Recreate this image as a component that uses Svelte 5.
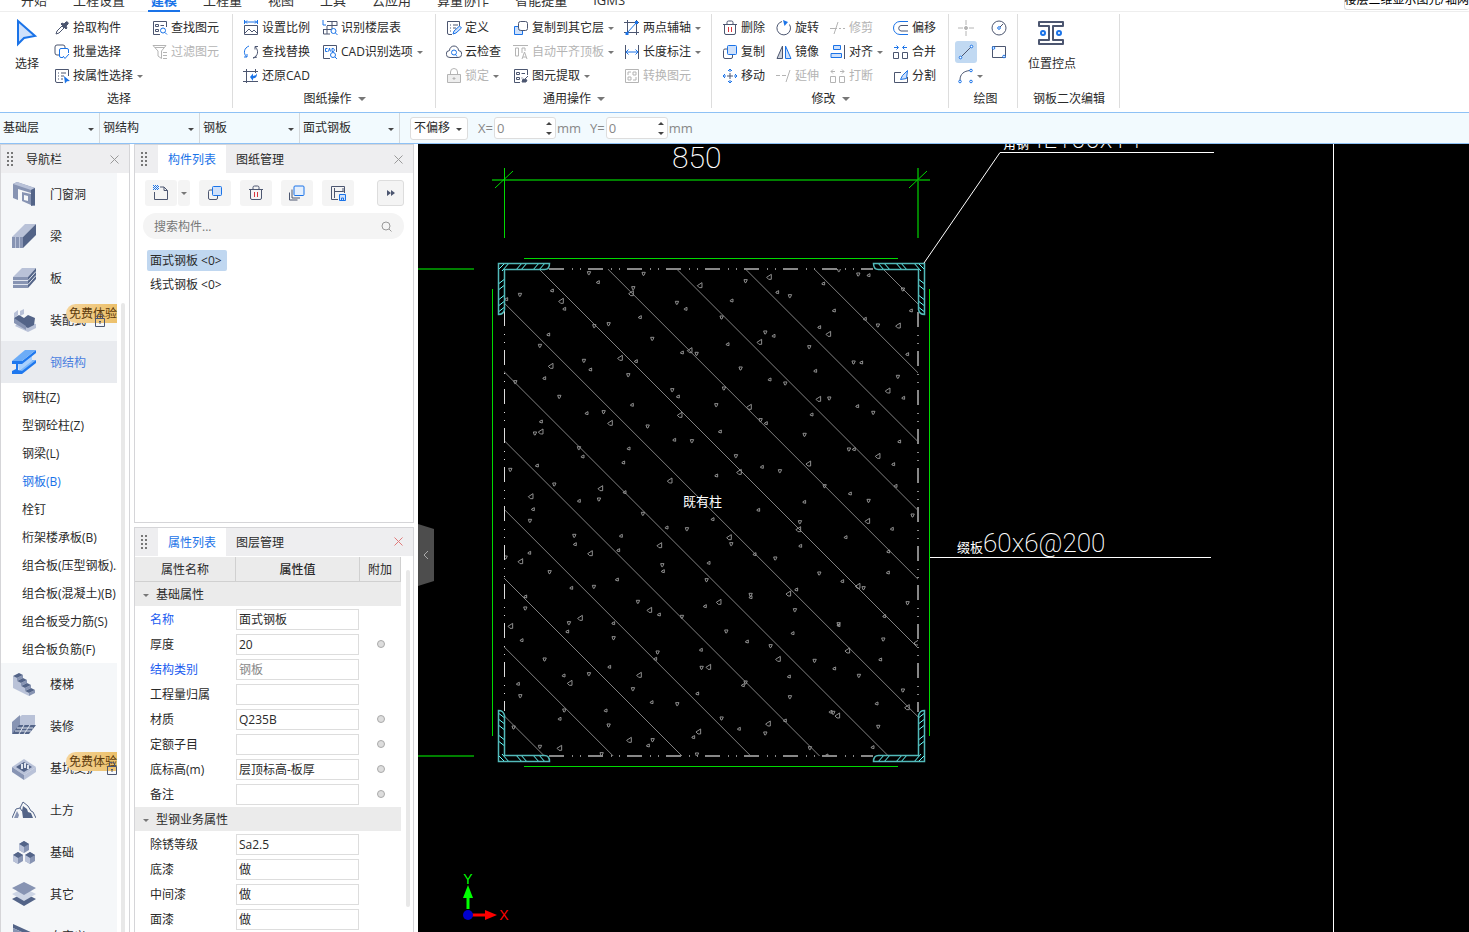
<script>
	const tabs = ['开始', '工程设置', '建模', '工程量', '视图', '工具', '云应用', '算量协作', '智能提量', 'IGMS'];
	let activeTab = $state('建模');

	// Inner markup of the 16x16 tool icons
	const icons = {
		pick: '<path d="M2 14l1-3 5-5 2 2-5 5z"/><path fill="currentColor" d="M7 4l5 5 1-1-1-2 2-2c1-1-1-3-2-2l-2 2-2-1z"/>',
		batch: '<path d="M5 11H3a2 2 0 0 1-2-2V3a2 2 0 0 1 2-2h6a2 2 0 0 1 2 2v1"/><path stroke="#1a73e8" d="M14.500 9V6a1.500 1.500 0 0 0-1.500-1.500H7A1.500 1.500 0 0 0 5.500 6v6A1.500 1.500 0 0 0 7 13.500h2M9 12l2 2.500 4-4.500"/>',
		property: '<path d="M9 14.500H3A1.500 1.500 0 0 1 1.500 13V1.500h13V8M4 5h1m2 0h5M4 8h1m2 0h3M4 11h1m2 0h2"/><path fill="#1a73e8" stroke="none" d="M10 8l6 5-3 .3-2 2.200z"/>',
		find: '<path d="M8 14.500H1.500v-13h13V7M3.500 4.500h3v2h-3zm0 5h3v2h-3zM8.500 5.500H12"/><g stroke="#1a73e8"><circle cx="11" cy="10.500" r="2.500"/><path d="M13 12.500l2 2"/></g>',
		filter: '<path d="M1 1.500h13L9.500 7v7.500L6 12V7zM11 8.500h4m-4 3h4m-4 3h4M3 3.500h9"/>',
		scale: '<path d="M1.500 5.500h13v9h-13zM2 13l4-4 3 3 2-2 3 3"/><path stroke="#1a73e8" d="M1.500 0v4M14.500 0v4M2 2h12M4 .5L2.500 2 4 3.500M12 .5L13.500 2 12 3.500"/>',
		floors: '<path d="M5 1.500h10V6M10 1v8M5 5.500h10M1.500 9v5H8M1.500 9.500H9M5 6v8"/><g stroke="#1a73e8"><path d="M1 0v5h3"/><circle cx="11.500" cy="11" r="2.500"/><path d="M13.500 13l2 2"/></g>',
		replace: '<path stroke="#1a73e8" d="M6 2C1 4 0 9 3.500 13M1 13h3v-3"/><path d="M10 14c5-2 6-7 2.500-11M15 2.500h-3v3M10 14l4-1"/>',
		cad: '<path d="M8 14.500H1.500v-13h13V8"/><g stroke="#1a73e8"><path d="M5.500 4.500h-2v3h2M6.500 7.500L7.500 4l1 3.500M10 4.500v3h1.500l1-1.500-1-1.500z"/><circle cx="11" cy="11" r="2.500"/><path d="M13 13l2 2"/></g>',
		restore: '<path d="M0 3.500h15M3.500 1v14M0 13.500h15M12.500 1v4"/><path fill="#1a73e8" stroke="none" d="M7 9l3-3.500V8c2 0 3.500-1 4-3 0 4-1 5-4 5.500V13z"/>',
		define: '<path d="M6 14.500H3A1.500 1.500 0 0 1 1.500 13V1.500h12V6M4 5h1m2 0h5M4 8h1m2 0h3M4 11h1"/><path stroke="#1a73e8" fill="#cfe1fb" d="M7 14l1-3 5.500-5 2 2-5.500 5z"/>',
		cloud: '<path d="M4 13.500a3.500 3.500 0 0 1-.5-7 4.500 4.500 0 0 1 9 0 3.500 3.500 0 0 1-.5 7z"/><g stroke="#1a73e8"><circle cx="8" cy="8.500" r="2.500"/><path d="M9.500 10.500l1.500 2"/></g>',
		lock: '<path fill="#eee" d="M1.500 6.500h13v8h-13z"/><path d="M4.500 6V4a3.500 3.500 0 0 1 7 0v2M8 9v3M6.500 10.500h3"/>',
		copyTo: '<path fill="#cfe1fb" stroke="#1a73e8" d="M5 6.500H1.500v8h8V11"/><rect x="5.500" y="1.500" width="9" height="9" rx="2"/>',
		alignTop: '<path d="M0 1.500h15M2.500 4v8h3V4zM9 9V4h3v3M9 15l2.500-7 2.500 7M10 13h3"/>',
		extract: '<path d="M7 14.500H1.500v-13h13V7M3.500 4.500h3v2h-3zm0 5h3v2h-3zM8.500 5.500H12M8.500 10h1"/><path fill="currentColor" d="M9 14l1-3 4 1-1 2zM12 11l3-3"/>',
		axis: '<path d="M3.500 0v15M12.500 0v15M0 2.500h15M0 12.500h15"/><path stroke="#1a73e8" d="M3 13L13 2"/><path fill="#1a73e8" stroke="none" d="M1.500 12h3v3h-3zM11 1h3v3h-3z"/>',
		length: '<path d="M1.500 1v14M14.500 1v14"/><path stroke="#1a73e8" d="M2 8h12M4.500 5.500L2 8l2.500 2.500M11.500 5.500L14 8l-2.500 2.500"/>',
		convert: '<path d="M1.500 1.500h13v13h-13zM9 4h3v3H9zM4 9h3v3H4zM4 7V4h3M12 9v3H9"/>',
		trash: '<path d="M1 4.500h14M5 4V2.500A1.500 1.500 0 0 1 6.500 1h3A1.500 1.500 0 0 1 11 2.500V4M2.500 5v8A1.500 1.500 0 0 0 4 14.500h8a1.500 1.500 0 0 0 1.500-1.500V5"/><path stroke="#d9363e" d="M6.500 7v5M9.500 7v5"/>',
		copy: '<path d="M5 5H3a1.500 1.500 0 0 0-1.500 1.500V13A1.500 1.500 0 0 0 3 14.500h6a1.500 1.500 0 0 0 1.500-1.500v-2"/><rect x="5.500" y="1.500" width="9" height="9" rx="1" fill="#cfe1fb" stroke="#1a73e8"/>',
		move: '<path d="M5 8h6M8 5v6"/><path stroke="#1a73e8" d="M8 4V1M6 3l2-2 2 2M8 12v3M6 13l2 2 2-2M4 8H1M3 6L1 8l2 2M12 8h3M13 6l2 2-2 2"/>',
		rotate: '<path d="M6 1.500a6.800 6.800 0 1 0 7.500 3M10 14.500"/><path fill="#1a73e8" stroke="none" d="M7 0l5 2-3.500 4z"/>',
		mirror: '<path fill="#cdd2da" d="M6.500 2v12.500H1z"/><path fill="#cfe1fb" stroke="#1a73e8" d="M9.500 2v12.500H15z"/>',
		extend: '<path d="M0 7.500h4m2 0h4M10 14l4-12"/>',
		trim: '<path d="M0 8.500h7M4 14L8 2m1 6.500h2m2 0h2"/>',
		align: '<path d="M14.500 1v14"/><path fill="#cfe1fb" stroke="#1a73e8" d="M3.500 1.500h7v4h-7zM1 9.500h10.500v4H1z"/>',
		break: '<path d="M.5 8.500h5v6h-5zM9.500 8.500h5v6h-5zM5 3.500H1M3 1.500l-2 2 2 2M10 3.500h4M12 1.500l2 2-2 2"/>',
		offset: '<path stroke="#1a73e8" d="M15 1.500H7a6.500 6.500 0 0 0 0 13h8"/><path d="M15 5.500H8a2.800 2.800 0 0 0 0 5.500h7"/>',
		merge: '<path d="M.5 8.500h5v6h-5zM9.500 8.500h5v6h-5z"/><path stroke="#1a73e8" d="M1 3.500h4M3.500 1.500l2 2-2 2M14 3.500h-4M11.500 1.500l-2 2 2 2"/>',
		split: '<path d="M8 4.500H1.500v10h13V9"/><path stroke="#1a73e8" fill="#cfe1fb" d="M7.500 11.500l2-4 5-5-1 8z"/>',
		point: '<path d="M8 0v5M8 11v5M0 8h5M11 8h5"/><circle cx="8" cy="8" r="1.500" fill="currentColor"/>',
		circle: '<circle cx="8" cy="8" r="7"/><path d="M8 8l4-4"/><circle cx="8" cy="8" r="1.300" fill="#fff" stroke="#1a73e8"/>',
		line: '<path d="M3 13L13 3"/><g fill="#fff" stroke="#1a73e8"><circle cx="2.500" cy="13.500" r="1.300"/><circle cx="13.500" cy="2.500" r="1.300"/></g>',
		rect: '<path d="M1.500 2.500h13v11h-13z"/><g fill="#fff" stroke="#1a73e8"><circle cx="2.500" cy="4" r="1.300"/><circle cx="13" cy="12.500" r="1.300"/></g>',
		arc: '<path d="M2 12C2 6 6 3 12 2.500"/><g fill="#fff" stroke="#1a73e8"><circle cx="2" cy="13.500" r="1.300"/><circle cx="13" cy="2.500" r="1.300"/><circle cx="13" cy="13.500" r="1.300"/></g>',
		create: '<path d="M1.500 7v7.500h13V5.500L11 2H7M11 2v3.500h3.500"/><path stroke="#1a73e8" stroke-dasharray="1 1" d="M0 .5h5M1 1.500h5M0 2.500h5M1 3.500h5M0 4.500h5"/>',
		layers: '<path d="M3 4.500v8.500h8M.5 7.500V15h8"/><rect x="5" y="1" width="10" height="9.500" rx="1" fill="#e4effd" stroke="#1a73e8"/>',
		save: '<path d="M8 14.500H1.500v-13h13V8M4.500 3v10M4.500 6.500h9M13 3v4"/><path fill="#cfe1fb" stroke="#1a73e8" d="M9.500 9.500h6v6h-6zM11.500 15v-2h2v2"/>'
	};

	const groups = [
		{
			name: 'select',
			label: '选择',
			columns: [
				[['pick', '拾取构件'], ['batch', '批量选择'], ['property', '按属性选择', 'menu']],
				[['find', '查找图元'], ['filter', '过滤图元', 'off']]
			]
		},
		{
			name: 'sheets',
			label: '图纸操作',
			more: true,
			columns: [
				[['scale', '设置比例'], ['replace', '查找替换'], ['restore', '还原CAD']],
				[['floors', '识别楼层表'], ['cad', 'CAD识别选项', 'menu']]
			]
		},
		{
			name: 'common',
			label: '通用操作',
			more: true,
			columns: [
				[['define', '定义'], ['cloud', '云检查'], ['lock', '锁定', 'menu off']],
				[['copyTo', '复制到其它层', 'menu'], ['alignTop', '自动平齐顶板', 'menu off'], ['extract', '图元提取', 'menu']],
				[['axis', '两点辅轴', 'menu'], ['length', '长度标注', 'menu'], ['convert', '转换图元', 'off']]
			]
		},
		{
			name: 'modify',
			label: '修改',
			more: true,
			columns: [
				[['trash', '删除'], ['copy', '复制'], ['move', '移动']],
				[['rotate', '旋转'], ['mirror', '镜像'], ['extend', '延伸', 'off']],
				[['trim', '修剪', 'off'], ['align', '对齐', 'menu'], ['break', '打断', 'off']],
				[['offset', '偏移'], ['merge', '合并'], ['split', '分割']]
			]
		}
	];

	const drawTools = [
		['point', '点', 'off'],
		['circle', '圆', ''],
		['line', '直线', ''],
		['rect', '矩形', ''],
		['arc', '弧', 'menu']
	];
	let drawMode = $state('line');

	const filters = [
		['楼层', '基础层'],
		['构件大类', '钢结构'],
		['构件类型', '钢板'],
		['构件', '面式钢板']
	];

	// 24x24 category icons
	const shapes = {
		door: '<path fill="#8794b3" d="M1 2l4-2 18 6v18l-4-1V11L6 7v11l-5-2z"/><path fill="#b9c2d8" d="M1 2l4-2 18 6-4 2z"/><path fill="#536488" d="M19 8l4-2v17l-4 1z"/><path fill="#8794b3" d="M10 10l9 2v11l-9-4z"/><path fill="#f5f7f9" d="M12 13l4 1v5l-4-1z"/>',
		beam: '<path fill="#b9c2d8" d="M0 13L13 0h11L11 13z"/><path fill="#8794b3" d="M0 13h11v11H0z"/><path fill="#536488" d="M11 13L24 0v11L11 24z"/><path stroke="#b9c2d8" d="M3.500 13v11M7.500 13v11"/>',
		slab: '<path fill="#b9c2d8" d="M1 11l9-9h14l-8 9z"/><path fill="#8794b3" d="M1 11h15v11H1z"/><path fill="#536488" d="M16 11l8-9v11l-8 9z"/><path stroke="#dfe4ee" fill="none" d="M1 14.500h15l8-9M1 18.500h15l8-9"/>',
		prefab: '<path fill="#b9c2d8" d="M2 5l4-3v5l-4 3zM8 3l4-2v5l-4 2zM3 18l4-4 17 2v4l-8 4z"/><path fill="#536488" d="M2 10l5-3 5 3 4-3 7 3-1 7-6 3-12-5z"/><path fill="#8794b3" d="M2 10v5l12 7v-4z"/>',
		steel: '<path fill="#7db8fa" d="M7 21L19 10h5L11 21z"/><path fill="#a9d0fd" d="M6 13h4l10-8v6L7 21z"/><path fill="#1f78ee" d="M0 11h10v3H6v6l4 1v3H0v-3l4-2v-5H0z"/><path fill="#1f78ee" d="M10 11L24 0v3L10 14zM10 21l14-11v3L10 24z"/><path fill="#6cacf7" d="M0 11L13 0h11L10 11z"/>',
		stairs: '<path fill="#b9c2d8" d="M1 4l4 2v3l4 2v3l4 2v3l4 2v3L1 16z"/><path fill="#8794b3" d="M5 6l6-3v3L5 9zM9 11l6-3v3l-6 3zM13 16l6-3v3l-6 3zM17 21l6-3v3l-6 3z"/><path fill="#536488" d="M1 4l6-3 4 2-6 3zM5 9l6-3 4 2-6 3zM9 14l6-3 4 2-6 3zM13 19l6-3 4 2-6 3z"/>',
		decor: '<path fill="#b9c2d8" d="M0 9l10-8h13v12H9z"/><path fill="#8794b3" d="M0 8l8-7v12L0 20z"/><path fill="#536488" d="M7 11h17l-7 9H0z"/><path stroke="#dfe4ee" d="M5 14h16M3 17h16M12 11l-5 9M18 11l-6 9"/>',
		pit: '<path fill="#b9c2d8" d="M0 11L12 3l12 8-12 8z"/><path fill="#536488" d="M4 11l8-5 8 5-8 5z"/><path fill="#8794b3" d="M0 11l12 8v5L0 16z"/><path fill="#b9c2d8" d="M24 11l-12 8v5l12-8z"/><path stroke="#dfe4ee" stroke-width="2" d="M10 8v5M13 7v5M16 9v4"/>',
		earth: '<path fill="none" stroke="#536488" d="M0 20l4-9 4-1 3-6 5 4 3 5 2 1 3 6M8 10l2 3"/><path fill="#536488" d="M11 8l4 3 1 3 3 1 2 5H11l-1-7z"/><path fill="#8794b3" d="M5 13l2 4-1 3H2z"/>',
		base: '<path fill="#8794b3" d="M12 1l5 3v6l-5 3-5-3V4zM6 12l5 3v6l-5 3-5-3v-6zM18 12l5 3v6l-5 3-5-3v-6z"/><path fill="#536488" d="M12 1l5 3-5 3-5-3zM6 12l5 3-5 3-5-3zM18 12l5 3-5 3-5-3z"/><path fill="#b9c2d8" d="M12 7v6L7 10V4zM6 18v6l-5-3v-6zM18 18v6l-5-3v-6z"/>',
		other: '<path fill="#536488" d="M0 17l12-6 12 6-12 7z"/><path fill="#cdd5e5" d="M0 12l12-6 12 6-12 7z"/><path fill="#8794b3" d="M0 6l12-6 12 6-12 7z"/>',
		custom: '<path fill="#536488" d="M1 0l22 10v4L1 4z"/><path fill="#8794b3" d="M1 4l22 10H1z"/>'
	};

	const categories = [
		{ icon: 'door', name: '门窗洞' },
		{ icon: 'beam', name: '梁' },
		{ icon: 'slab', name: '板' },
		{ icon: 'prefab', name: '装配式', trial: true },
		{
			icon: 'steel',
			name: '钢结构',
			children: [
				'钢柱(Z)',
				'型钢砼柱(Z)',
				'钢梁(L)',
				'钢板(B)',
				'栓钉',
				'桁架楼承板(B)',
				'组合板(压型钢板)...',
				'组合板(混凝土)(B)',
				'组合板受力筋(S)',
				'组合板负筋(F)'
			]
		},
		{ icon: 'stairs', name: '楼梯' },
		{ icon: 'decor', name: '装修' },
		{ icon: 'pit', name: '基坑支护', trial: true },
		{ icon: 'earth', name: '土方' },
		{ icon: 'base', name: '基础' },
		{ icon: 'other', name: '其它' },
		{ icon: 'custom', name: '自定义' }
	];
	let openChild = $state('钢板(B)');

	const components = ['面式钢板 <0>', '线式钢板 <0>'];
	let selected = $state(components[0]);

	const properties = [
		{ title: '基础属性' },
		{ label: '名称', value: '面式钢板', key: true },
		{ label: '厚度', value: '20', extra: true },
		{ label: '结构类别', value: '钢板', key: true, locked: true },
		{ label: '工程量归属', value: '' },
		{ label: '材质', value: 'Q235B', extra: true },
		{ label: '定额子目', value: '', extra: true },
		{ label: '底标高(m)', value: '层顶标高-板厚', extra: true },
		{ label: '备注', value: '', extra: true },
		{ title: '型钢业务属性' },
		{ label: '除锈等级', value: 'Sa2.5' },
		{ label: '底漆', value: '做' },
		{ label: '中间漆', value: '做' },
		{ label: '面漆', value: '做' }
	];

	// Concrete hatch: aggregate stones, in thirds of a screen pixel.
	// down / left are the small stones, big are the large ones.
	const stones = [
		{
			top: 0,
			down: '327,387 797,411 491,389 120,452 930,456 1135,391 591,476 386,540 856,565 517,584 343,546 180,605 312,650 650,629 988,609 1121,655 1194,544 445,693 782,673 1254,698 106,714 577,738 732,733 916,718 238,758 709,783 1048,763 371,804 842,828 1180,806 503,847 974,872 165,868 636,891 297,912 1107,916 725,520 1269,436 460,432 1077,378',
			left: '354,415 1166,394 216,440 892,445 1030,419 79,466 755,470 253,495 617,495 1062,500 1293,500 480,520 1155,525 1018,550 205,572 881,576 743,601 606,626 1282,631 468,652 1144,656 331,677 1006,681 193,703 869,707 594,758 1270,762 456,783 1132,787 320,808 995,812 183,833 858,838 720,863 583,888 1258,893 446,914 1122,916',
			big: '660,424 868,399 244,471 1255,545 1046,570 839,594 630,619 421,642 213,666 1224,740 1016,765 808,789 600,813 391,837 183,863 454,448'
		},
		{
			top: 306,
			down: '91,59 223,103 768,18 357,148 900,63 489,191 1034,108 150,212 621,237 1166,152 283,257 754,282 1298,196 960,216 77,322 547,345 886,325 209,366 680,390 1018,370 342,410 812,434 1151,414 474,455 945,480 1283,459 136,475 606,500 1076,522 267,519 739,544 1210,568 401,564 872,588 533,607 1004,632 194,628 665,653 1137,677 327,672 797,697 1269,721 459,717 930,741 121,738 592,762 1060,788 253,781 725,805 1195,830 386,826 856,850 101,832 518,870 990,894 180,890 651,913 365,912',
			left: '308,20 171,47 430,38 846,51 1240,43 709,77 434,127 1247,108 1110,131 297,153 973,156 159,178 835,180 698,208 560,233 1236,237 423,258 1097,262 285,283 961,288 415,301 824,313 148,309 686,339 549,364 1225,305 1224,368 411,389 1087,394 274,414 949,419 136,440 812,442 675,469 537,494 1213,499 400,520 1076,526 262,545 938,550 801,575 125,571 663,600 526,627 1201,629 388,651 1063,656 251,677 927,680 114,702 789,706 652,731 515,757 1190,761 377,782 1052,786 239,807 915,812 777,837 640,862 504,887 1178,892 1040,917',
			big: '1194,18 986,41 778,66 570,92 362,115 153,139 1163,213 956,238 748,262 539,286 331,310 122,334 1134,408 926,431 717,456 509,480 301,504 92,528 1103,602 895,627 686,651 478,675 270,699 1282,772 1073,797 865,821 656,845 448,870 239,894 1310,578'
		}
	];

	const outline = {
		down: 'm-5-4h10l-4 9h-3z',
		left: 'm4-5v9l-8-2v-3z',
		big: 'm6-8v15h-8l-6-6z'
	};

	const stonePath = (points, kind) =>
		points
			.split(' ')
			.map((p) => `M${p}${outline[kind]}`)
			.join('');

	const diagonals = Array.from({ length: 13 }, (_, i) => 121 + (i - 7) * 68.8);
	const corners = [
		'translate(80 119)',
		'translate(507 119) scale(-1 1)',
		'translate(80 618) scale(1 -1)',
		'translate(507 618) scale(-1 -1)'
	];
</script>

{#snippet glyph(name)}
	<svg class="glyph" viewBox="0 0 16 16" aria-hidden="true">{@html icons[name]}</svg>
{/snippet}

{#snippet grip()}
	<svg class="grip" width="8" height="16" aria-hidden="true">
		<path stroke="#777" stroke-width="2" stroke-dasharray="2 2" d="M2 1v14M6 1v14" />
	</svg>
{/snippet}

{#snippet cross()}
	<svg width="9" height="9" viewBox="0 0 9 9" aria-hidden="true">
		<path stroke="currentColor" fill="none" d="M.5.5l8 8M8.500.5l-8 8" />
	</svg>
{/snippet}

<div class="app">
	<nav class="tabs">
		{#each tabs as tab}
			<a href="#{tab}" class:active={tab === activeTab} onclick={() => (activeTab = tab)}>{tab}</a>
		{/each}
		<span class="hint">楼层三维显示图元/轴网</span>
	</nav>

	<div class="ribbon">
		{#each groups as group}
			<section class="group {group.name}">
				<div class="tools">
					{#if group.name === 'select'}
						<button class="large">
							<svg width="22" height="28" viewBox="0 0 22 28" aria-hidden="true">
								<path fill="#cfe1fb" stroke="#1a73e8" stroke-width="2" d="M2 2v23l6-6 11-2z" />
							</svg>
							选择
						</button>
					{/if}
					{#each group.columns as column}
						<div class="column">
							{#each column as [icon, text, flags = '']}
								<button class="tool" disabled={flags.includes('off')}>
									{@render glyph(icon)}
									<span>{text}</span>
									{#if flags.includes('menu')}<i class="caret"></i>{/if}
								</button>
							{/each}
						</div>
					{/each}
				</div>
				<footer>
					{group.label}
					{#if group.more}<i class="caret wide"></i>{/if}
				</footer>
			</section>
		{/each}

		<section class="group draw">
			<div class="tools">
				{#each drawTools as [icon, text, flags]}
					<button
						class="mode"
						class:active={drawMode === icon}
						disabled={flags === 'off'}
						aria-label={text}
						onclick={() => (drawMode = icon)}
					>
						{@render glyph(icon)}
						{#if flags === 'menu'}<i class="caret"></i>{/if}
					</button>
				{/each}
			</div>
			<footer>绘图</footer>
		</section>

		<section class="group edit">
			<div class="tools">
				<button class="large">
					<svg width="28" height="28" viewBox="0 0 28 28" aria-hidden="true">
						<path
							fill="#fff"
							stroke="#4c5670"
							stroke-width="2"
							stroke-linejoin="round"
							d="M1 3h24v4H15v14h10v4H1v-4h10V7H1z"
						/>
						<g fill="#fff" stroke="#1a73e8" stroke-width="2">
							<circle cx="5" cy="14" r="2" />
							<circle cx="21" cy="14" r="2" />
						</g>
					</svg>
					位置控点
				</button>
			</div>
			<footer>钢板二次编辑</footer>
		</section>
	</div>

	<div class="context">
		{#each filters as [name, value]}
			<label class="filter">
				<select aria-label={name}><option>{value}</option></select>
			</label>
		{/each}
		<label class="filter boxed">
			<select aria-label="偏移方式"><option>不偏移</option></select>
		</label>
		{#each ['X', 'Y'] as axis}
			<label class="offset">
				{axis}=
				<span class="spin"><input type="number" value="0" /></span>
				mm
			</label>
		{/each}
	</div>

	<main>
		<aside class="navigator">
			<header>
				{@render grip()}
				<h2>导航栏</h2>
				<button class="close" aria-label="关闭导航栏">{@render cross()}</button>
			</header>
			<div class="scroller">
				<ul>
					{#each categories as category}
						<li>
							<button class="category" class:open={category.children}>
								<svg width="24" height="24" viewBox="0 0 24 24" aria-hidden="true">
									{@html shapes[category.icon]}
								</svg>
								<span>{category.name}</span>
								{#if category.trial}
									<em>免费体验</em>
									<svg class="padlock" width="10" height="13" viewBox="0 0 10 13" aria-hidden="true">
										<path fill="none" stroke="#4c5670" d="M.5 4.500h9v8h-9zM2.500 4V2a2.500 2 0 0 1 5 0v2M5 8v2M4 7.500h2" />
									</svg>
								{/if}
							</button>
							{#if category.children}
								<ul class="children">
									{#each category.children as child}
										<li>
											<button class:current={child === openChild} onclick={() => (openChild = child)}>
												{child}
											</button>
										</li>
									{/each}
								</ul>
							{/if}
						</li>
					{/each}
				</ul>
				<div class="track"><i></i></div>
			</div>
		</aside>

		<div class="docks">
			<section class="dock list">
				<header>
					{@render grip()}
					<button class="tab active">构件列表</button>
					<button class="tab">图纸管理</button>
					<button class="close" aria-label="关闭构件列表">{@render cross()}</button>
				</header>
				<div class="actions">
					<div class="pair">
						<button aria-label="新建">{@render glyph('create')}</button>
						<button class="drop" aria-label="新建选项"><i class="caret"></i></button>
					</div>
					<button aria-label="复制">{@render glyph('copy')}</button>
					<button aria-label="删除">{@render glyph('trash')}</button>
					<button aria-label="层间复制">{@render glyph('layers')}</button>
					<button aria-label="存档">{@render glyph('save')}</button>
					<button class="more" aria-label="更多">
						<svg width="8" height="6" viewBox="0 0 8 6"><path fill="#4c5670" d="M0 0l4 3-4 3zM4 0l4 3-4 3z" /></svg>
					</button>
				</div>
				<label class="search">
					<input type="text" placeholder="搜索构件..." aria-label="搜索构件" />
					<svg width="11" height="11" viewBox="0 0 11 11" aria-hidden="true">
						<circle cx="5" cy="5" r="4" /><path d="M8 8l2.500 2.500" />
					</svg>
				</label>
				<ul class="components">
					{#each components as item}
						<li>
							<button class:selected={item === selected} onclick={() => (selected = item)}>{item}</button>
						</li>
					{/each}
				</ul>
			</section>

			<section class="dock props">
				<header>
					{@render grip()}
					<button class="tab active">属性列表</button>
					<button class="tab">图层管理</button>
					<button class="close red" aria-label="关闭属性列表">{@render cross()}</button>
				</header>
				<div class="scroller">
					<table>
						<thead>
							<tr><th class="name">属性名称</th><th class="value">属性值</th><th>附加</th></tr>
						</thead>
						<tbody>
							{#each properties as row, i}
								{#if row.title}
									<tr class="title"><th colspan="3"><i class="caret"></i>{row.title}</th></tr>
								{:else}
									<tr>
										<td class:key={row.key}><label for="prop-{i}">{row.label}</label></td>
										<td><input id="prop-{i}" type="text" value={row.value} disabled={row.locked} /></td>
										<td class="extra">
											{#if row.extra}<input type="checkbox" aria-label="{row.label}附加" />{/if}
										</td>
									</tr>
								{/if}
							{/each}
						</tbody>
					</table>
					<div class="track"><i></i></div>
				</div>
			</section>
		</div>

		<div class="canvas">
			<svg class="drawing" aria-label="柱截面图">
				<defs>
					<clipPath id="column"><path d="M86 125h414v487H86z" /></clipPath>
					<clipPath id="angle"><path d="M0 0h52q0 6-5 7H7v40q-1 5-7 5z" /></clipPath>
				</defs>

				<g stroke="#008000" stroke-width="2">
					<path d="M74 36h438M500 24v70M0 125h56M0 612h56" />
				</g>
				<g class="thin" stroke="#00d800">
					<path d="M86.500 24v70M106 114.500h374M74.500 145v447M511.500 145v447M106 622.500h374" />
					<path d="M77 44l18-17M491 44l18-17" />
				</g>

				<g clip-path="url(#column)">
					<g class="hatch">
						{#each diagonals as x}
							<path d="M{x} 125l487 487" />
						{/each}
					</g>
					{#each stones as half}
						<g class="stones" transform="translate(62 {half.top}) scale(.3333)">
							<path d={stonePath(half.down, 'down')} />
							<path d={stonePath(half.left, 'left')} />
							<path d={stonePath(half.big, 'big')} />
						</g>
					{/each}
				</g>

				<g class="boundary">
					<path d="M131 125h324M131 612h324M500 168v400" />
					<path class="left" d="M86.500 167v400" />
				</g>

				{#each corners as transform}
					<g {transform} fill="none">
						<path stroke="#6ff" clip-path="url(#angle)" d="M0 7l7-7M4 8l8-9M17 8l8-9M22 8l8-9M34 8l8-9M40 8l8-9M-1 22l9-7M-1 28l9-7M-1 38l9-7M-1 44l9-7M-1 50l9-7" />
						<path stroke="#52b9b9" stroke-width="1.500" d="M.5.5h51q0 6-5 6H6.500v40q-1 5-6 5z" />
					</g>
				{/each}

				<path fill="none" stroke="#fff" d="M506 119l76-110.500h214M512 413.500h281M915.500 0v2000" />

				<g class="note">
					<text class="dim" x="254" y="24">850</text>
					<text class="cjk" x="265" y="362">既有柱</text>
					<text x="539" y="408"><tspan class="cjk">缀板</tspan>60x6@200</text>
					<text x="585" y="4"><tspan class="cjk">角钢</tspan>4L100x14</text>
				</g>
			</svg>

			<svg class="axes" width="100" height="64" aria-label="坐标轴">
				<path stroke="#0f0" stroke-width="3" d="M50 41V27" />
				<path fill="#0f0" d="M50 17l5 13H45z" />
				<path stroke="red" stroke-width="3" d="M53 47h16" />
				<path fill="red" d="M79 47l-12-5v10z" />
				<circle cx="50" cy="47" r="5" fill="#00c" />
				<text x="50" y="16" fill="#0f0">Y</text>
				<text x="86" y="52" fill="red">X</text>
			</svg>

			<button class="collapse" aria-label="收起面板">
				<svg width="6" height="10" viewBox="0 0 6 10"><path fill="none" stroke="#aaa" d="M5 1L1 5l4 4" /></svg>
			</button>
		</div>
	</main>
</div>

<style>
	:global(body) {
		margin: 0;
		background: #fff;
	}

	.app {
		display: flex;
		flex-direction: column;
		height: 100vh;
		overflow: hidden;
		color: #2a2a2a;
		font: 12px/18px 'Open Sans', 'Noto Sans CJK SC', sans-serif;
	}

	button,
	input,
	select {
		box-sizing: border-box;
		margin: 0;
		padding: 0;
		border: 0;
		background: none;
		color: inherit;
		font: inherit;
	}

	ul {
		margin: 0;
		padding: 0;
		list-style: none;
	}

	.caret {
		flex: none;
		width: 0;
		border: 3px solid transparent;
		border-top-color: #777;
		border-bottom: 0;

		&.wide {
			border-width: 4px;
			border-bottom: 0;
			margin-left: 6px;
		}
	}

	.glyph {
		flex: none;
		width: 16px;
		height: 16px;
		fill: none;
		stroke: currentColor;
		color: #4c5670;
	}

	/* Menu tabs */
	.tabs {
		display: flex;
		flex: none;
		align-items: flex-end;
		height: 12px;
		padding-left: 8px;
		overflow: hidden;
		box-shadow: inset 0 -1px #eee;
		font-size: 13px;

		& a {
			flex: none;
			margin: 0 10px;
			padding: 0 3px 1px;
			border-bottom: 2px solid transparent;
			color: #333;
			text-decoration: none;

			&.active {
				border-color: #1a73e8;
				color: #1a73e8;
				font-weight: bold;
			}
		}

		& .hint {
			margin: 0 0 2px auto;
			border: solid #ddd;
			border-width: 0 0 1px 1px;
			border-radius: 3px;
			color: #000;
			font-size: 12px;
			white-space: nowrap;
		}
	}

	/* Ribbon */
	.ribbon {
		display: flex;
		flex: none;
		height: 100px;
	}

	.group {
		position: relative;
		display: flex;
		flex: none;
		flex-direction: column;
		box-sizing: border-box;
		padding: 4px 0 0 10px;

		&::after {
			position: absolute;
			inset: 2px 0 4px auto;
			width: 1px;
			background: #ddd;
			content: '';
		}

		& .tools {
			display: grid;
			height: 74px;
		}

		& footer {
			display: flex;
			align-items: center;
			justify-content: center;
			margin-left: -10px;
		}
	}

	.select {
		width: 233px;
		padding-left: 0;

		& .tools {
			grid-template-columns: 54px 98px 1fr;
		}

		& footer {
			margin-left: 5px;
		}
	}

	.sheets {
		width: 203px;

		& .tools {
			grid-template-columns: 79px 1fr;
		}
	}

	.common {
		width: 276px;

		& .tools {
			grid-template-columns: 67px 111px 1fr;
		}
	}

	.modify {
		width: 237px;

		& .tools {
			grid-template-columns: 54px 54px 63px 1fr;
		}
	}

	.draw {
		width: 69px;
		padding-left: 6px;

		& .tools {
			grid-template: repeat(3, 24px) / 33px 1fr;
			align-items: center;
		}

		& footer {
			margin-left: -2px;
		}
	}

	.edit {
		width: 102px;
	}

	.tool {
		display: flex;
		align-items: center;
		gap: 3px;
		height: 24px;
		white-space: nowrap;

		& .caret {
			margin-left: 1px;
		}
	}

	button:disabled,
	button:disabled .glyph {
		color: #b4b4b4;
	}

	.large {
		display: flex;
		flex-direction: column;
		align-items: center;
		gap: 8px;
		justify-self: start;
		height: 62px;
		padding: 3px 0 0 15px;

		.edit & {
			padding-left: 0;
		}
	}

	.mode {
		display: flex;
		align-items: center;
		gap: 3px;
		justify-self: start;
		height: 22px;
		padding: 0 3px;
		border-radius: 3px;

		&.active {
			background: #c1d9f2;
		}
	}

	/* Context bar */
	.context {
		display: flex;
		flex: none;
		align-items: center;
		box-sizing: border-box;
		height: 32px;
		border: solid #8ec1f5;
		border-width: 1px 0;
		background: #f2fafe;
	}

	.filter {
		position: relative;
		box-sizing: border-box;
		width: 100px;
		height: 30px;
		border-right: 1px solid #d5d9dc;

		& select {
			width: 100%;
			height: 100%;
			padding-left: 3px;
			appearance: none;
		}

		&::after {
			position: absolute;
			top: 50%;
			right: 5px;
			border: 3px solid transparent;
			border-top-color: #444;
			border-bottom: 0;
			content: '';
			pointer-events: none;
		}

		&.boxed {
			width: 58px;
			height: 23px;
			margin: 0 10px;
			border: 1px solid #ddd;
			border-radius: 3px;
			background: #fff;
		}
	}

	.offset {
		display: flex;
		align-items: center;
		gap: 1px;
		padding-right: 9px;
		color: #888;
		font-size: 13px;

		& input {
			width: 62px;
			height: 22px;
			padding-left: 2px;
			border: 1px solid #ddd;
			border-radius: 3px;
			background: #fff;
			appearance: textfield;
		}
	}

	.spin {
		position: relative;

		&::before,
		&::after {
			position: absolute;
			right: 4px;
			border: 3px solid transparent;
			content: '';
		}

		&::before {
			top: 5px;
			border-top: 0;
			border-bottom-color: #444;
		}

		&::after {
			bottom: 4px;
			border-bottom: 0;
			border-top-color: #444;
		}
	}

	main {
		display: flex;
		flex: 1;
		min-height: 0;
	}

	/* Docked panels */
	.navigator,
	.dock {
		display: flex;
		flex-direction: column;
		box-sizing: border-box;
		border: 1px solid #d5d5d8;

		& header {
			display: flex;
			flex: none;
			align-items: center;
			height: 28px;
			padding: 0 10px 0 5px;
			background: #eeeef0;
		}

		& h2 {
			margin: 0 0 0 12px;
			padding-top: 2px;
			font: inherit;
		}
	}

	.close {
		display: flex;
		margin-left: auto;
		color: #999;

		&.red {
			color: #e07a7a;
		}
	}

	.scroller {
		display: flex;
		flex: 1;
		min-height: 0;
		overflow: hidden;
	}

	.track i {
		display: block;
		width: 4px;
		border-radius: 2px;
		background: #e8e8e8;
	}

	.navigator {
		flex: none;
		width: 130px;
		border-bottom: 0;

		& ul {
			width: 116px;
		}

		& .track i {
			height: 700px;
			margin: 130px 0 0 4px;
		}
	}

	.category {
		position: relative;
		display: flex;
		align-items: center;
		width: 100%;
		height: 42px;
		padding-left: 11px;
		background: #f5f7f9;
		white-space: nowrap;

		& span {
			margin-left: 14px;
			padding-top: 2px;
		}

		&.open {
			background: #e9ebef;
			color: #4a80e0;
		}

		& em {
			position: absolute;
			top: 5px;
			right: 0;
			height: 19px;
			padding: 0 0 0 3px;
			width: 48px;
			border-radius: 10px 0 0 10px;
			background: linear-gradient(90deg, #f5d59c, #ecc06a);
			color: #5c3a0c;
			font-style: normal;
			line-height: 20px;
		}

		& .padlock {
			position: relative;
			margin-left: 9px;
		}
	}

	.children button {
		width: 100%;
		height: 28px;
		padding: 2px 0 0 21px;
		overflow: hidden;
		text-align: left;
		white-space: nowrap;

		&.current {
			color: #1a73e8;
		}
	}

	.docks {
		display: flex;
		flex: none;
		flex-direction: column;
		gap: 4px;
		width: 280px;
		margin: 0 4px;
	}

	.tab {
		height: 28px;
		padding: 2px 10px 0;

		&.active {
			margin-left: 10px;
			background: #fff;
			color: #1a73e8;
		}
	}

	.list {
		flex: 378 0 0;
		min-height: 0;
	}

	.props {
		flex: 406 0 0;
		min-height: 0;
		border-bottom: 0;
	}

	.actions {
		display: flex;
		gap: 9px;
		padding: 7px 9px 0 10px;

		& button {
			display: flex;
			align-items: center;
			justify-content: center;
			width: 32px;
			height: 26px;
			border-radius: 3px;
			background: #f4f4f4;
		}

		& .pair {
			display: flex;
			gap: 1px;
		}

		& .drop {
			width: 12px;
		}

		& .more {
			width: 27px;
			margin-left: auto;
			border: 1px solid #ddd;
		}
	}

	.search {
		display: flex;
		align-items: center;
		height: 26px;
		margin: 7px 9px 0 8px;
		padding: 0 12px 0 11px;
		border-radius: 13px;
		background: #f4f4f4;

		& input {
			flex: 1;
			min-width: 0;
			padding-top: 2px;
			outline: 0;
		}

		& input::placeholder {
			color: #777;
		}

		& svg {
			fill: none;
			stroke: #999;
		}
	}

	.components {
		display: grid;
		gap: 3px;
		padding: 11px 12px;

		& button {
			height: 21px;
			padding: 0 5px 0 3px;
			border-radius: 2px;

			&.selected {
				background: #c0d7f0;
			}
		}
	}

	/* Property table */
	.props .track i {
		height: 337px;
		margin: 14px 0 0 5px;
	}

	table {
		width: 265px;
		height: min-content;
		flex: none;
		margin-top: 1px;
		border-collapse: separate;
		border-spacing: 0;
		table-layout: fixed;
	}

	th,
	td {
		box-sizing: border-box;
		height: 25px;
		padding: 0;
		font-weight: normal;
	}

	thead th {
		width: 41px;
		padding-top: 2px;
		border: solid #d0d0d0;
		border-width: 0 1px 1px 0;
		background: #ebebeb;

		&.name {
			width: 101px;
		}

		&.value {
			width: 124px;
			font-weight: 500;
		}
	}

	.title th {
		padding: 2px 0 0 8px;
		border-bottom: 1px solid #fff;
		background: #ebebeb;
		text-align: left;

		& .caret {
			display: inline-block;
			margin-right: 7px;
			vertical-align: middle;
		}
	}

	td:first-child {
		padding: 2px 0 0 15px;
	}

	.key {
		color: #1a5cf0;
	}

	td input[type='text'] {
		display: block;
		width: 123px;
		height: 21px;
		padding-left: 2px;
		border: 1px solid #ddd;

		&:disabled {
			color: #888;
		}
	}

	.extra input {
		display: block;
		width: 8px;
		height: 8px;
		margin: 0 auto;
		border: 1px solid #aaa;
		border-radius: 50%;
		background: #ddd;
		appearance: none;
	}

	/* Drawing area */
	.canvas {
		position: relative;
		flex: 1;
		min-width: 0;
		overflow: hidden;
		background: #000;
	}

	.drawing {
		display: block;
		width: 100%;
		height: 100%;
	}

	.thin {
		fill: none;
	}

	.hatch {
		stroke: #808080;
	}

	.stones {
		fill: none;
		stroke: #909090;
		stroke-width: 3;
	}

	.boundary {
		stroke: #888;
		stroke-width: 2;
		stroke-dasharray: 15 8 1 7 1 7;

		& .left {
			stroke: #ddd;
			stroke-width: 1;
		}
	}

	.note {
		fill: #fff;
		font: 200 26px Roboto, 'Noto Sans CJK SC', sans-serif;

		& .dim {
			font-size: 30px;
		}

		& .cjk {
			font-size: 13px;
			font-weight: 400;
		}
	}

	.axes {
		position: absolute;
		bottom: 0;
		left: 0;
		font: 14px 'Liberation Sans', sans-serif;
		text-anchor: middle;
	}

	.collapse {
		position: absolute;
		top: 380px;
		left: 0;
		display: flex;
		align-items: center;
		justify-content: center;
		width: 16px;
		height: 62px;
		background: #4d4d4d;
		clip-path: polygon(0 0, 100% 5px, 100% 57px, 0 100%);
	}
</style>
